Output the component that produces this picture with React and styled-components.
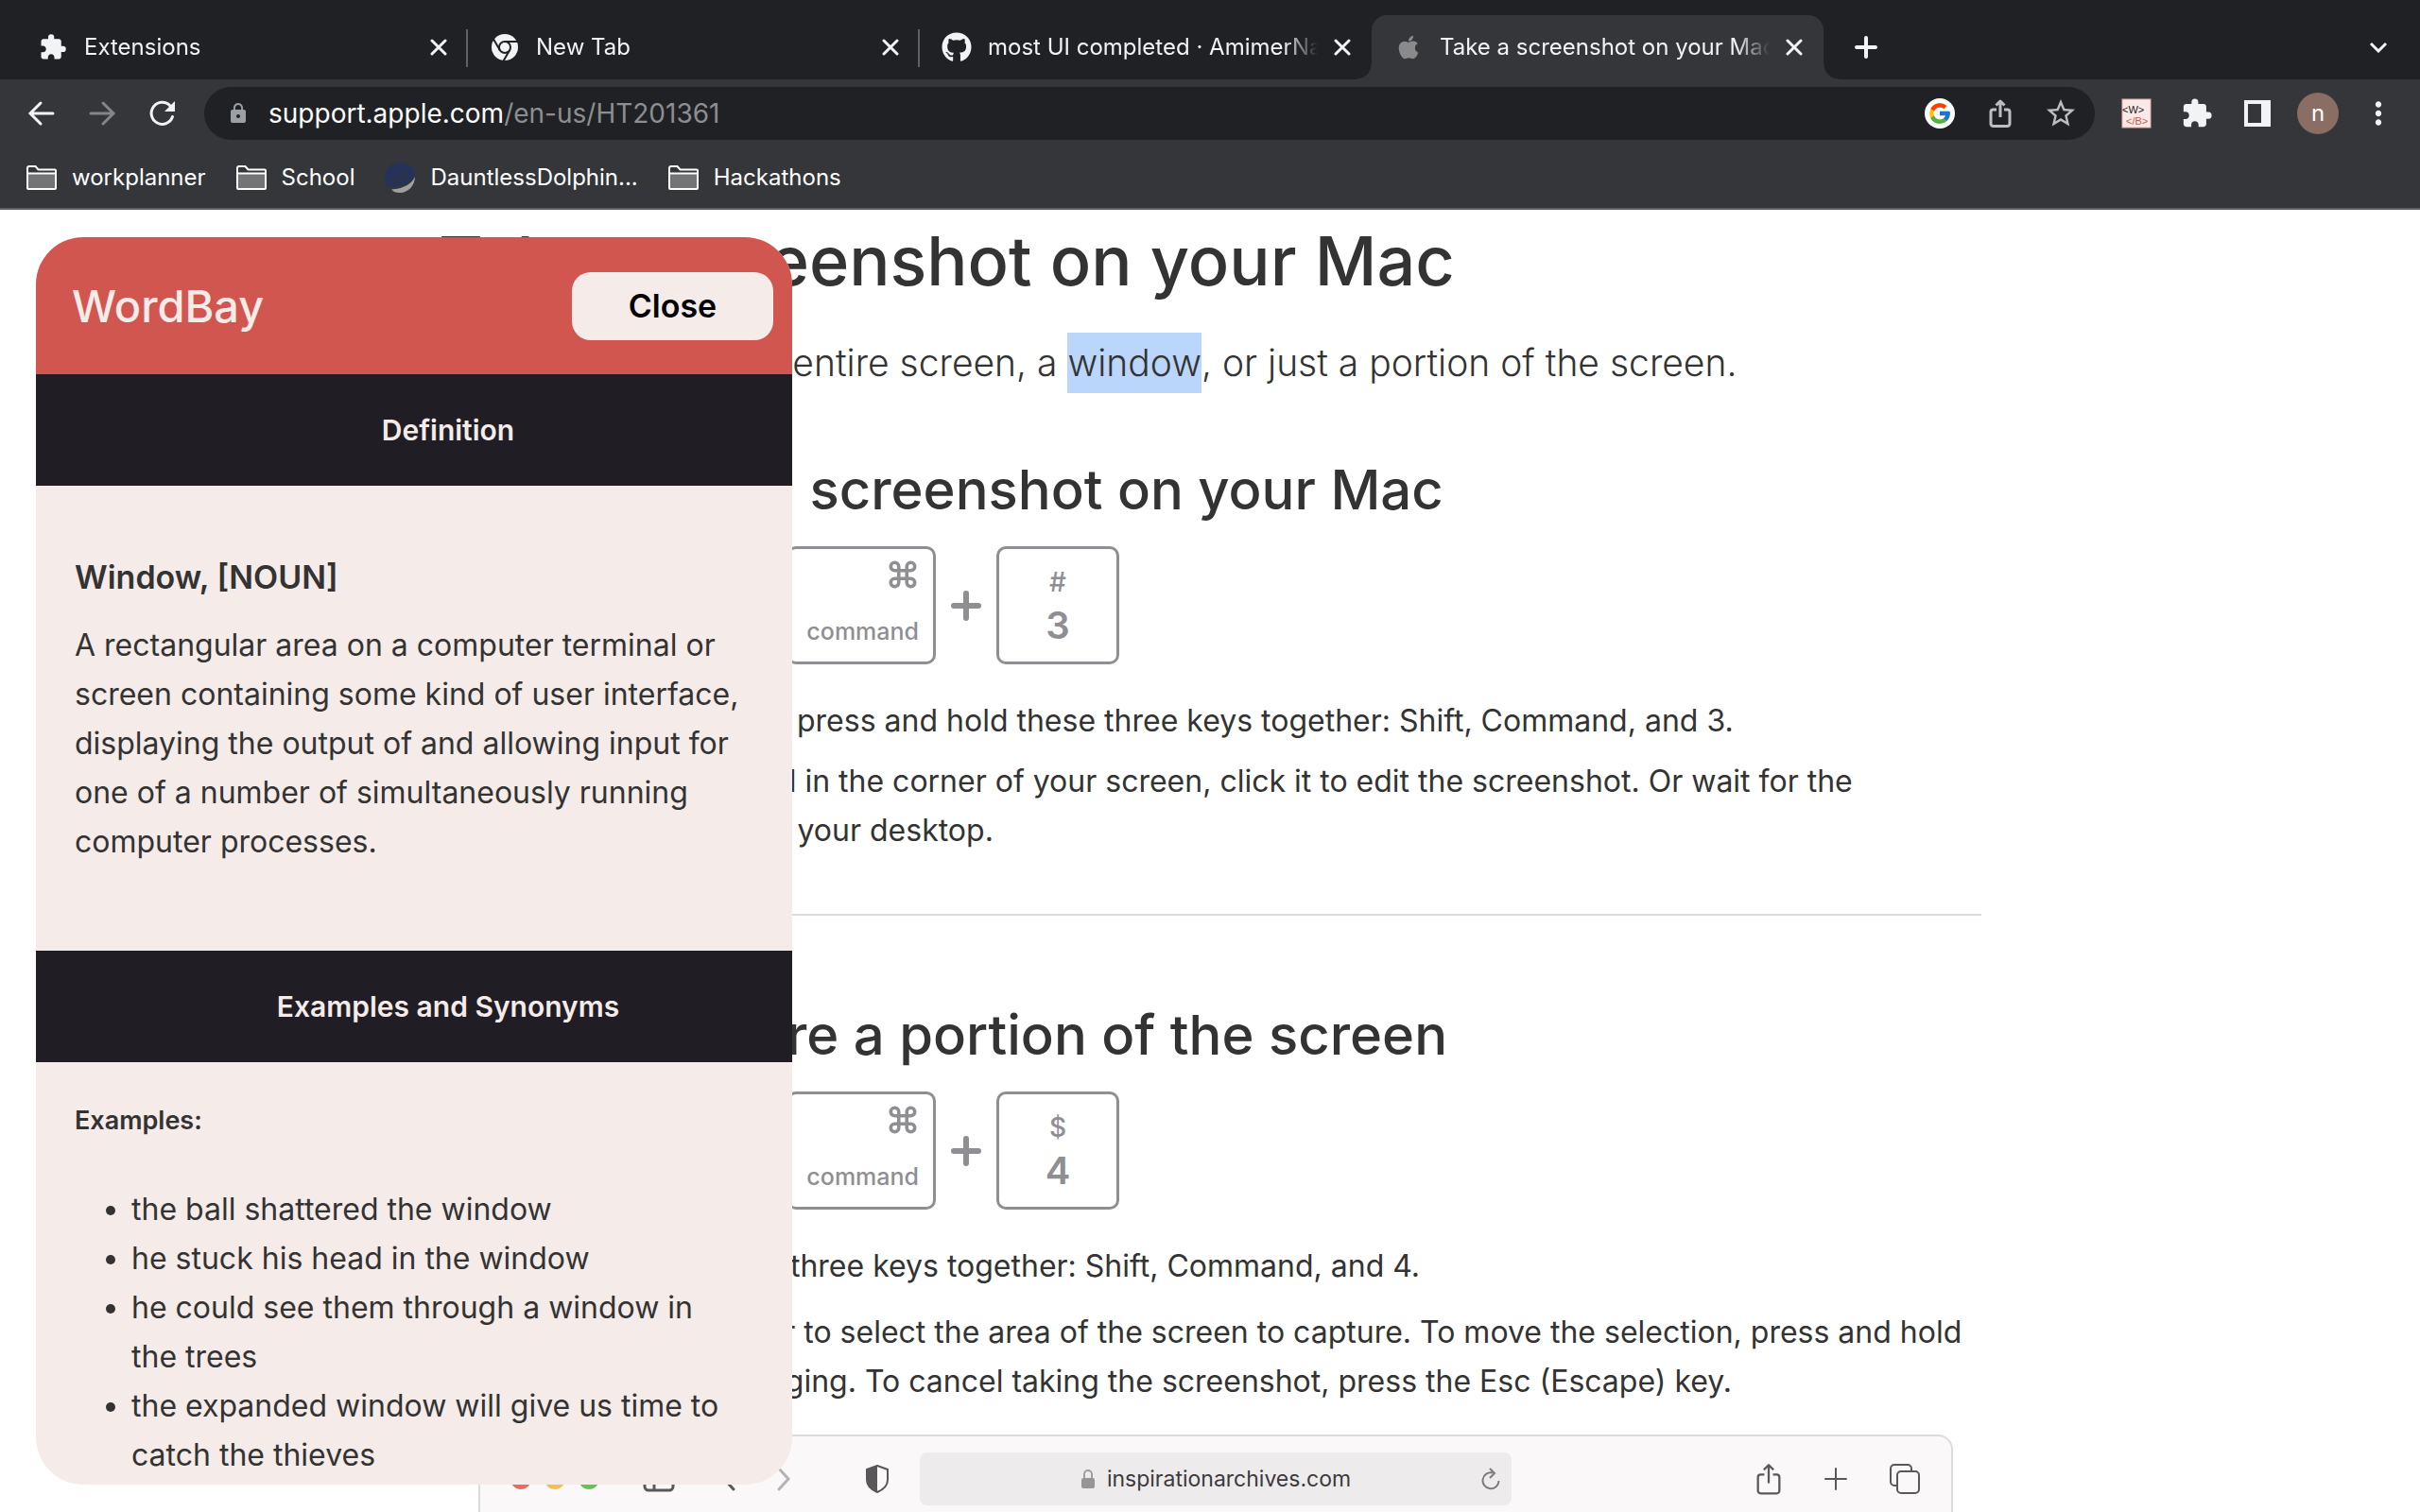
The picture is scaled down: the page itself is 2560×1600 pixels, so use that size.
import React, { useState } from 'react';
import styled, { createGlobalStyle, css } from 'styled-components';
import { MdExtension, MdLock, MdMoreVert, MdStarBorder } from 'react-icons/md';
import { FaApple, FaGithub } from 'react-icons/fa';
import { FcGoogle } from 'react-icons/fc';
import { Command } from 'lucide-react';

const GlobalStyle = createGlobalStyle`
  * {
    box-sizing: border-box;
  }

  body {
    margin: 0;
    font-family: Inter, "Liberation Sans", sans-serif;
    color: #333333;
    background: #ffffff;
  }

  button {
    font: inherit;
    color: inherit;
    border: 0;
    padding: 0;
    background: none;
    cursor: pointer;
  }

  a {
    color: inherit;
    text-decoration: none;
  }

  h1, h2, h3, h4, p, ul, ol {
    margin: 0;
    padding: 0;
  }

  svg {
    display: block;
    flex: none;
  }
`;

const Window = styled.div`
  height: 100vh;
  display: flex;
  flex-direction: column;
  overflow: hidden;
`;

// Browser

const TabStrip = styled.div`
  height: 84px;
  flex: none;
  display: flex;
  align-items: flex-end;
  padding: 0 28px 0 17px;
  background: #202124;
  color: #f1f3f4;
`;

const Tab = styled.div`
  position: relative;
  flex: 0 1 478px;
  min-width: 0;
  height: 68px;
  display: flex;
  align-items: center;
  gap: 17px;
  padding: 0 22px 0 23px;

  ${({ $divider }) => $divider && css`
    &::after {
      content: '';
      position: absolute;
      right: 0;
      top: 15px;
      width: 2px;
      height: 40px;
      background: #5f6164;
    }
  `}

  ${({ $active }) => $active && css`
    background: #35363a;
    border-radius: 16px 16px 0 0;

    &::before,
    &::after {
      content: '';
      position: absolute;
      bottom: 0;
      width: 16px;
      height: 16px;
    }

    &::before {
      left: -16px;
      background: radial-gradient(circle at 0 0, transparent 15px, #35363a 16px);
    }

    &::after {
      right: -16px;
      background: radial-gradient(circle at 100% 0, transparent 15px, #35363a 16px);
    }
  `}
`;

const TabIcon = styled.span`
  width: 32px;
  flex: none;
  display: flex;
  justify-content: center;
  color: ${({ $muted }) => ($muted ? '#8a8a8c' : '#f1f3f4')};
`;

const TabTitle = styled.button`
  flex: 1;
  min-width: 0;
  overflow: hidden;
  white-space: nowrap;
  text-align: left;
  font-size: 24px;
  line-height: 32px;
  mask-image: linear-gradient(to right, #000 calc(100% - 36px), transparent);
`;

const StripButton = styled.button`
  width: 32px;
  height: 68px;
  display: flex;
  align-items: center;
  justify-content: center;
  margin-left: ${({ $end }) => ($end ? 'auto' : '29px')};
`;

const Toolbar = styled.div`
  height: 72px;
  flex: none;
  display: flex;
  align-items: center;
  gap: 28px;
  padding: 0 28px;
  background: #35363a;
  color: #f1f3f4;
`;

const IconRow = styled.div`
  flex: none;
  display: grid;
  grid-auto-flow: column;
  grid-auto-columns: 32px;
  gap: 32px;
  place-items: center;
`;

const IconButton = styled.button`
  display: flex;
  align-items: center;
  justify-content: center;
  color: ${({ $color }) => $color || '#f1f3f4'};
`;

const Omnibox = styled.div`
  flex: 1;
  height: 56px;
  display: flex;
  align-items: center;
  gap: 16px;
  padding: 0 20px;
  border-radius: 28px;
  background: #202124;
`;

const LockSlot = styled.span`
  width: 32px;
  display: flex;
  justify-content: center;
  color: #9aa0a6;
`;

const Address = styled.div`
  flex: 1;
  font-size: 28px;
  line-height: 40px;
  color: #ffffff;
  outline: none;

  span {
    color: #8d8e91;
  }
`;

const GoogleBadge = styled.button`
  width: 32px;
  height: 32px;
  display: flex;
  align-items: center;
  justify-content: center;
  border-radius: 50%;
  background: #ffffff;
`;

const Avatar = styled.button`
  width: 44px;
  height: 44px;
  border-radius: 50%;
  background: #8a6e64;
  color: #ffffff;
  font-size: 24px;
  line-height: 44px;
`;

const BookmarksBar = styled.nav`
  height: 66px;
  flex: none;
  display: flex;
  align-items: center;
  gap: 32px;
  padding: 0 28px;
  background: #35363a;
  border-bottom: 2px solid #5f5e63;
  color: #ffffff;
`;

const Bookmark = styled.a`
  display: flex;
  align-items: center;
  gap: 16px;
  font-size: 24px;
  line-height: 32px;
`;

// Support article

const Main = styled.main`
  position: relative;
  flex: 1;
  min-height: 0;
  overflow: hidden;
`;

const Article = styled.article`
  max-width: 1632px;
  margin: 0 auto;
  padding-top: 10px;
`;

const Title = styled.h1`
  font-size: 72px;
  line-height: 88px;
  font-weight: 500;
`;

const Intro = styled.p`
  margin-top: 32px;
  font-size: 39px;
  line-height: 64px;
  font-weight: 300;
`;

const Selected = styled.span`
  display: inline-block;
  background: #bbd6fb;
`;

const Section = styled.section`
  padding-top: ${({ $first }) => ($first ? '66px' : '90px')};
`;

const Heading = styled.h2`
  font-size: 58px;
  line-height: 72px;
  font-weight: 500;
`;

const Keys = styled.div`
  display: flex;
  align-items: center;
  gap: 16px;
  margin-top: 24px;
  color: #8e8e93;
`;

const Key = styled.div`
  width: ${({ $width }) => $width || '130px'};
  height: 125px;
  display: flex;
  flex-direction: column;
  align-items: ${({ $side }) => ($side ? 'flex-end' : 'center')};
  justify-content: ${({ $side }) => ($side ? 'space-between' : 'center')};
  padding: ${({ $side }) => ($side ? '10px 15px 16px' : '10px 0 0')};
  border: 3px solid #8e8e93;
  border-radius: 10px;
  font-size: 25px;
  line-height: 32px;
  font-weight: 500;
`;

const KeySymbol = styled.span`
  font-size: 28px;
`;

const KeyNumber = styled.span`
  font-size: 40px;
  line-height: 60px;
  font-weight: 600;
`;

const Steps = styled.ol`
  list-style: none;
  margin: 34px 0 0 46px;
  display: flex;
  flex-direction: column;
  gap: ${({ $gap }) => $gap}px;
  font-size: 32px;
  line-height: 52px;

  svg {
    display: inline-block;
    vertical-align: middle;
  }
`;

const Rule = styled.hr`
  height: 2px;
  margin: 62px 0 0;
  border: 0;
  background: #dcdcdc;
`;

const Preview = styled.div`
  height: 320px;
  margin: 30px 30px 0 42px;
  border: 2px solid #dcdcdf;
  border-radius: 16px 16px 0 0;
  background: #fbf8f9;
  color: #59575a;
`;

const PreviewBar = styled.div`
  height: 90px;
  display: grid;
  grid-template-columns: 1fr 626px 1fr;
  align-items: center;
`;

const PreviewLeft = styled.div`
  display: flex;
  align-items: center;
  padding: 0 32px;
`;

const Lights = styled.div`
  display: flex;
  gap: 14px;
  margin-right: 46px;
`;

const Light = styled.span`
  width: 22px;
  height: 22px;
  border-radius: 50%;
  background: ${({ $color }) => $color};
`;

const Chevrons = styled.div`
  display: flex;
  gap: 44px;
  margin: 0 auto 0 50px;
`;

const PreviewAddress = styled.div`
  height: 56px;
  display: grid;
  grid-template-columns: 44px 1fr 44px;
  place-items: center;
  border-radius: 8px;
  background: #eeebec;
  color: #3c3a3d;
  font-size: 23px;
  line-height: 32px;
`;

const Site = styled.span`
  grid-column: 2;
  display: flex;
  align-items: center;
  gap: 12px;
`;

const PreviewRight = styled.div`
  display: flex;
  align-items: center;
  justify-content: flex-end;
  gap: 43px;
  padding-right: 33px;
`;

// WordBay panel

const Panel = styled.aside`
  position: absolute;
  top: 29px;
  bottom: 29px;
  left: 38px;
  width: 800px;
  overflow: hidden;
  border-radius: 50px;
  background: #f5ebe8;
`;

const PanelHeader = styled.header`
  height: 145px;
  display: flex;
  align-items: center;
  justify-content: space-between;
  padding: 0 20px 0 38px;
  background: #d25650;
`;

const Brand = styled.h2`
  font-size: 47px;
  line-height: 60px;
  font-weight: 500;
  color: #f5ebe8;
`;

const CloseButton = styled.button`
  width: 213px;
  height: 72px;
  border-radius: 20px;
  background: #f5ebe8;
  color: #000000;
  font-size: 34px;
  font-weight: 600;
`;

const PanelBand = styled.h3`
  height: 118px;
  display: flex;
  align-items: center;
  justify-content: center;
  padding-left: 72px;
  background: #201e24;
  color: #f5ebe8;
  font-size: 30px;
  line-height: 40px;
  font-weight: 600;
`;

const PanelBody = styled.div`
  padding: ${({ $compact }) => ($compact ? '42px 62px 32px 41px' : '71px 41px 89px')};
  font-size: 32px;
  line-height: 52px;
`;

const Term = styled.h4`
  margin-bottom: 20px;
  font-size: 34px;
  font-weight: 600;
`;

const ExamplesLabel = styled.h4`
  margin-bottom: 48px;
  font-size: 27px;
  line-height: 40px;
  font-weight: 600;
`;

const ExampleList = styled.ul`
  padding-left: 60px;
`;

const CloseIcon = () => (
  <svg width="18" height="18" viewBox="0 0 18 18" fill="none" stroke="currentColor" strokeWidth="3" strokeLinecap="round">
    <path d="M2 2l14 14M16 2L2 16" />
  </svg>
);

const ArrowIcon = ({ forward }) => (
  <svg width="32" height="32" viewBox="0 0 32 32" fill="none" stroke="currentColor" strokeWidth="3" strokeLinecap="round">
    <path d={forward ? 'M4 16h23M17 5l11 11-11 11' : 'M28 16H5M15 5L4 16l11 11'} />
  </svg>
);

const RefreshIcon = () => (
  <svg width="32" height="32" viewBox="0 0 32 32">
    <path d="M26.500 19.500A11.500 11.500 0 1 1 24 8" fill="none" stroke="currentColor" strokeWidth="3" strokeLinecap="round" />
    <path d="M29 3v11H18z" fill="currentColor" />
  </svg>
);

const ChromeIcon = () => (
  <svg width="28" height="28" viewBox="0 0 28 28">
    <circle cx="14" cy="14" r="14" fill="#f1f3f4" />
    <circle cx="14" cy="14" r="7" fill="#202124" />
    <g stroke="#202124" strokeWidth="2">
      <path d="M14 8h14" />
      <path d="M14 8h14" transform="rotate(120 14 14)" />
      <path d="M14 8h14" transform="rotate(240 14 14)" />
    </g>
    <circle cx="14" cy="14" r="5" fill="#f1f3f4" />
  </svg>
);

const FolderIcon = () => (
  <svg width="32" height="26" viewBox="0 0 32 26">
    <path d="M2 9h28v15H2z" fill="#737476" />
    <path
      d="M1 24V3a2 2 0 0 1 2-2h6.500l3 3.500H30a1 1 0 0 1 1 1V24a1 1 0 0 1-1 1H2a1 1 0 0 1-1-1zM1 8.500h30"
      fill="none"
      stroke="#ffffff"
      strokeWidth="2"
    />
  </svg>
);

const DolphinIcon = () => (
  <svg width="32" height="32" viewBox="0 0 32 32">
    <path d="M0 18C-1 8 7 0 16 0c9 0 15 6 15.500 14C29 21 21 26 4 26.500 1.500 24 0 21 0 18z" fill="#25335a" />
    <path d="M32 15c0 9-7 17-16 17-4 0-7-1-9-3.500C20 28 29 22 32 15z" fill="#a3a09c" />
    <path d="M9 24V15M15 23V11M21 20V8" stroke="#2f3244" strokeWidth="3" />
  </svg>
);

const ShareIcon = ({ width = 24, height = 30, stroke = 3 }) => (
  <svg width={width} height={height} viewBox="0 0 24 30" fill="none" stroke="currentColor" strokeWidth={stroke} strokeLinejoin="round">
    <path d="M8 11H4.500A2.500 2.500 0 0 0 2 13.500V26a2.500 2.500 0 0 0 2.500 2.500h15A2.500 2.500 0 0 0 22 26V13.500A2.500 2.500 0 0 0 19.500 11H16" />
    <path d="M12 19V2M7.500 6.500L12 2l4.500 4.500" />
  </svg>
);

const WordBayIcon = () => (
  <svg width="32" height="32" viewBox="0 0 32 32">
    <rect x="1" y="1" width="30" height="30" fill="#f9e9e7" stroke="#e8a9a6" />
    <text x="1" y="16" fontSize="11" fontFamily="Liberation Sans, sans-serif" fill="#1d1b20">&lt;W&gt;</text>
    <text x="5" y="28" fontSize="11" fontFamily="Liberation Sans, sans-serif" fill="#d25650">&lt;/B&gt;</text>
  </svg>
);

const SidePanelIcon = () => (
  <svg width="28" height="28" viewBox="0 0 28 28">
    <path d="M0 0h28v28H0zM4 4v20h14V4z" fill="currentColor" fillRule="evenodd" />
  </svg>
);

const PlusIcon = ({ size = 24, stroke = 4 }) => (
  <svg width={size} height={size} viewBox={`0 0 ${size} ${size}`} stroke="currentColor" strokeWidth={stroke} strokeLinecap="round">
    <path d={`M${size / 2} 3v${size - 6}M3 ${size / 2}h${size - 6}`} />
  </svg>
);

const ChevronIcon = ({ left, color }) => (
  <svg width="14" height="26" viewBox="0 0 14 26" fill="none" stroke={color || 'currentColor'} strokeWidth="3" strokeLinecap="round">
    <path d={left ? 'M12 2L2 13l10 11' : 'M2 2l10 11L2 24'} />
  </svg>
);

const SidebarIcon = () => (
  <svg width="34" height="28" viewBox="0 0 34 28" fill="none" stroke="currentColor" strokeWidth="3">
    <rect x="2" y="2" width="30" height="24" rx="4" />
    <path d="M12 2v24M5 8h4M5 13h4" />
  </svg>
);

const ShieldIcon = () => (
  <svg width="26" height="30" viewBox="0 0 26 30">
    <path d="M13 1l11 4v11c0 6-4 10-11 13C6 26 2 22 2 16V5z" fill="none" stroke="currentColor" strokeWidth="2" />
    <path d="M13 1v28C6 26 2 22 2 16V5z" fill="currentColor" />
  </svg>
);

const TabsIcon = () => (
  <svg width="32" height="32" viewBox="0 0 32 32" fill="none" stroke="currentColor" strokeWidth="2">
    <path d="M8 23H5a4 4 0 0 1-4-4V5a4 4 0 0 1 4-4h14a4 4 0 0 1 4 4v3" />
    <rect x="8" y="8" width="23" height="23" rx="4" />
  </svg>
);

const SmallLockIcon = () => (
  <svg width="16" height="22" viewBox="0 0 16 22">
    <path d="M4 10V6a4 4 0 0 1 8 0v4" fill="none" stroke="#a09ea0" strokeWidth="2" />
    <rect x="1" y="10" width="14" height="11" rx="2" fill="#979597" />
  </svg>
);

const ReloadIcon = () => (
  <svg width="20" height="24" viewBox="0 0 20 24" fill="none" stroke="#7d7b7e" strokeWidth="2">
    <path d="M12 5.500A8.500 8.500 0 1 0 18.500 14M9 1l5 5-5 5" />
  </svg>
);

const CrosshairIcon = () => (
  <svg width="44" height="44" viewBox="0 0 44 44" fill="none" stroke="currentColor" strokeWidth="2">
    <circle cx="22" cy="22" r="10" />
    <path d="M22 4v36M4 22h36" />
  </svg>
);

const tabs = [
  { title: 'Extensions', icon: <MdExtension size={30} />, divider: true },
  { title: 'New Tab', icon: <ChromeIcon />, divider: true },
  { title: 'most UI completed · AmimerNasser/WordBay', icon: <FaGithub size={32} /> },
  { title: 'Take a screenshot on your Mac - Apple Support', icon: <FaApple size={28} />, active: true },
];

const bookmarks = [
  { title: 'workplanner', icon: <FolderIcon /> },
  { title: 'School', icon: <FolderIcon /> },
  { title: 'DauntlessDolphin...', icon: <DolphinIcon /> },
  { title: 'Hackathons', icon: <FolderIcon /> },
];

const examples = [
  'the ball shattered the window',
  'he stuck his head in the window',
  'he could see them through a window in the trees',
  'the expanded window will give us time to catch the thieves',
];

const KeyCombo = ({ symbol, number }) => (
  <Keys>
    <Key $side $width="304px">
      <span>⇧</span>
      <span>shift</span>
    </Key>
    <PlusIcon size={32} stroke={6} />
    <Key $side $width="158px">
      <Command size={34} strokeWidth={2.5} />
      <span>command</span>
    </Key>
    <PlusIcon size={32} stroke={6} />
    <Key>
      <KeySymbol>{symbol}</KeySymbol>
      <KeyNumber>{number}</KeyNumber>
    </Key>
  </Keys>
);

const WordBay = ({ onClose }) => (
  <Panel>
    <PanelHeader>
      <Brand>WordBay</Brand>
      <CloseButton onClick={onClose}>Close</CloseButton>
    </PanelHeader>
    <PanelBand>Definition</PanelBand>
    <PanelBody>
      <Term>Window, [NOUN]</Term>
      <p>
        A rectangular area on a computer terminal or screen containing some kind of user
        interface, displaying the output of and allowing input for one of a number of
        simultaneously running computer processes.
      </p>
    </PanelBody>
    <PanelBand>Examples and Synonyms</PanelBand>
    <PanelBody $compact>
      <ExamplesLabel>Examples:</ExamplesLabel>
      <ExampleList>
        {examples.map((example) => (
          <li key={example}>{example}</li>
        ))}
      </ExampleList>
    </PanelBody>
  </Panel>
);

const App = () => {
  const [open, setOpen] = useState(true);

  return (
    <>
      <GlobalStyle />
      <Window>
        <TabStrip>
          {tabs.map((tab) => (
            <Tab key={tab.title} $active={tab.active} $divider={tab.divider}>
              <TabIcon $muted={tab.active}>{tab.icon}</TabIcon>
              <TabTitle>{tab.title}</TabTitle>
              <IconButton aria-label="Close tab">
                <CloseIcon />
              </IconButton>
            </Tab>
          ))}
          <StripButton aria-label="New tab">
            <PlusIcon size={26} />
          </StripButton>
          <StripButton $end aria-label="Search tabs">
            <svg width="20" height="12" viewBox="0 0 20 12" fill="none" stroke="currentColor" strokeWidth="3">
              <path d="M2 2l8 8 8-8" />
            </svg>
          </StripButton>
        </TabStrip>

        <Toolbar>
          <IconRow>
            <IconButton aria-label="Back"><ArrowIcon /></IconButton>
            <IconButton aria-label="Forward" $color="#848588"><ArrowIcon forward /></IconButton>
            <IconButton aria-label="Reload"><RefreshIcon /></IconButton>
          </IconRow>
          <Omnibox>
            <LockSlot><MdLock size={24} /></LockSlot>
            <Address role="textbox" aria-label="Address" tabIndex={0}>
              support.apple.com<span>/en-us/HT201361</span>
            </Address>
            <IconRow>
              <GoogleBadge aria-label="Search with Google"><FcGoogle size={26} /></GoogleBadge>
              <IconButton aria-label="Share" $color="#bdbebf"><ShareIcon /></IconButton>
              <IconButton aria-label="Bookmark this page" $color="#bdbebf"><MdStarBorder size={36} /></IconButton>
            </IconRow>
          </Omnibox>
          <IconRow>
            <IconButton aria-label="WordBay"><WordBayIcon /></IconButton>
            <IconButton aria-label="Extensions"><MdExtension size={34} /></IconButton>
            <IconButton aria-label="Side panel"><SidePanelIcon /></IconButton>
            <Avatar aria-label="Profile">n</Avatar>
            <IconButton aria-label="Menu"><MdMoreVert size={38} /></IconButton>
          </IconRow>
        </Toolbar>

        <BookmarksBar>
          {bookmarks.map((bookmark) => (
            <Bookmark key={bookmark.title} href="#">
              {bookmark.icon}
              {bookmark.title}
            </Bookmark>
          ))}
        </BookmarksBar>

        <Main>
          <Article>
            <Title>Take a screenshot on your Mac</Title>
            <Intro>
              You can capture the entire screen, a <Selected>window</Selected>, or just a portion of
              the screen.
            </Intro>

            <Section $first>
              <Heading>How to take a screenshot on your Mac</Heading>
              <KeyCombo symbol="#" number="3" />
              <Steps $gap={12}>
                <li>To take a screenshot, press and hold these three keys together: Shift, Command, and 3.</li>
                <li>
                  If you see a thumbnail in the corner of your screen, click it to edit the screenshot.
                  Or wait for the screenshot to save to your desktop.
                </li>
              </Steps>
            </Section>
            <Rule />

            <Section>
              <Heading>How to capture a portion of the screen</Heading>
              <KeyCombo symbol="$" number="4" />
              <Steps $gap={18}>
                <li>Press and hold these three keys together: Shift, Command, and 4.</li>
                <li>
                  Drag the <CrosshairIcon /> crosshair to select the area of the screen to capture.
                  To move the selection, press and hold Space bar while dragging. To cancel taking
                  the screenshot, press the Esc (Escape) key.
                </li>
              </Steps>
              <Preview>
                <PreviewBar>
                  <PreviewLeft>
                    <Lights>
                      <Light $color="#ec6a5e" />
                      <Light $color="#f4bf4f" />
                      <Light $color="#61c554" />
                    </Lights>
                    <SidebarIcon />
                    <Chevrons>
                      <ChevronIcon left />
                      <ChevronIcon color="#b5b3b5" />
                    </Chevrons>
                    <ShieldIcon />
                  </PreviewLeft>
                  <PreviewAddress>
                    <Site>
                      <SmallLockIcon />
                      inspirationarchives.com
                    </Site>
                    <ReloadIcon />
                  </PreviewAddress>
                  <PreviewRight>
                    <ShareIcon width={28} height={34} stroke={2} />
                    <PlusIcon size={28} stroke={2} />
                    <TabsIcon />
                  </PreviewRight>
                </PreviewBar>
              </Preview>
            </Section>
          </Article>

          {open && <WordBay onClose={() => setOpen(false)} />}
        </Main>
      </Window>
    </>
  );
};

export default App;
